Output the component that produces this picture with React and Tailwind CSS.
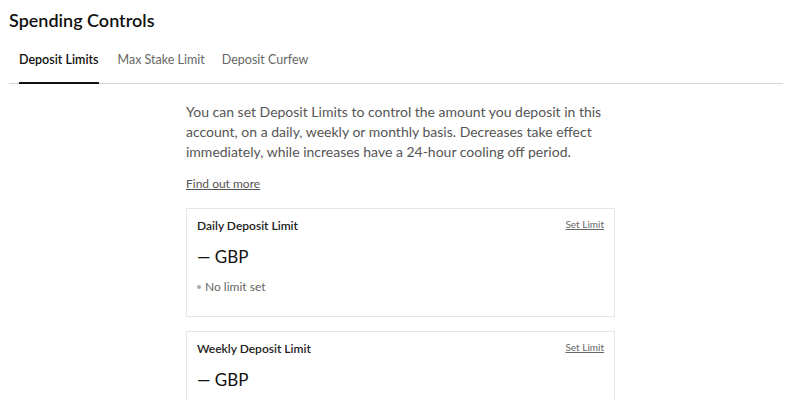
export default function App() {
  const cards = [
    { title: "Daily Deposit Limit", note: true },
    { title: "Weekly Deposit Limit", note: true },
  ];
  return (
    <div className="w-[793px] h-[400px] overflow-hidden bg-white font-['Lato',sans-serif] text-[#1a1a1a]">
      <div className="pl-[9px] pr-[10px]">
        <h1 className="pt-[9px] text-[18px] font-semibold leading-[22px] text-[#111]">Spending Controls</h1>
        <div className="mt-[20px] flex border-b border-[#d4d4d4] pl-[10px] text-[12.5px]">
          <div className="border-b-2 border-[#111] pb-[12px] font-semibold text-[#111] -mb-px">Deposit Limits</div>
          <div className="ml-[19px] pb-[12px] text-[#666]">Max Stake Limit</div>
          <div className="ml-[17px] pb-[12px] text-[#666]">Deposit Curfew</div>
        </div>
      </div>
      <div className="ml-[186px] w-[429px]">
        <p className="mt-[18px] text-[14px] leading-[20px] text-[#555]">
          You can set Deposit Limits to control the amount you deposit in this account, on a daily, weekly or monthly basis. Decreases take effect immediately, while increases have a 24-hour cooling off period.
        </p>
        <a className="mt-[14px] inline-block text-[12px] leading-[16px] text-[#555] underline">Find out more</a>
        <div className="mt-[14px] flex flex-col gap-[14px]">
          {cards.map((c) => (
            <div key={c.title} className="h-[109px] border border-[#e6e6e6] px-[10px] pt-[9px]">
              <div className="flex items-start justify-between">
                <div className="text-[12px] font-semibold leading-[16px] text-[#222]">{c.title}</div>
                <a className="text-[10px] leading-[12px] text-[#666] underline">Set Limit</a>
              </div>
              <div className="mt-[12px] text-[17px] leading-[22px] text-[#111]">— GBP</div>
              <div className="mt-[11px] flex items-center text-[12px] leading-[16px] text-[#666]">
                <span className="mr-[4px] inline-block h-[4px] w-[4px] rounded-full bg-[#aaa]"></span>
                No limit set
              </div>
            </div>
          ))}
        </div>
      </div>
    </div>
  );
}
